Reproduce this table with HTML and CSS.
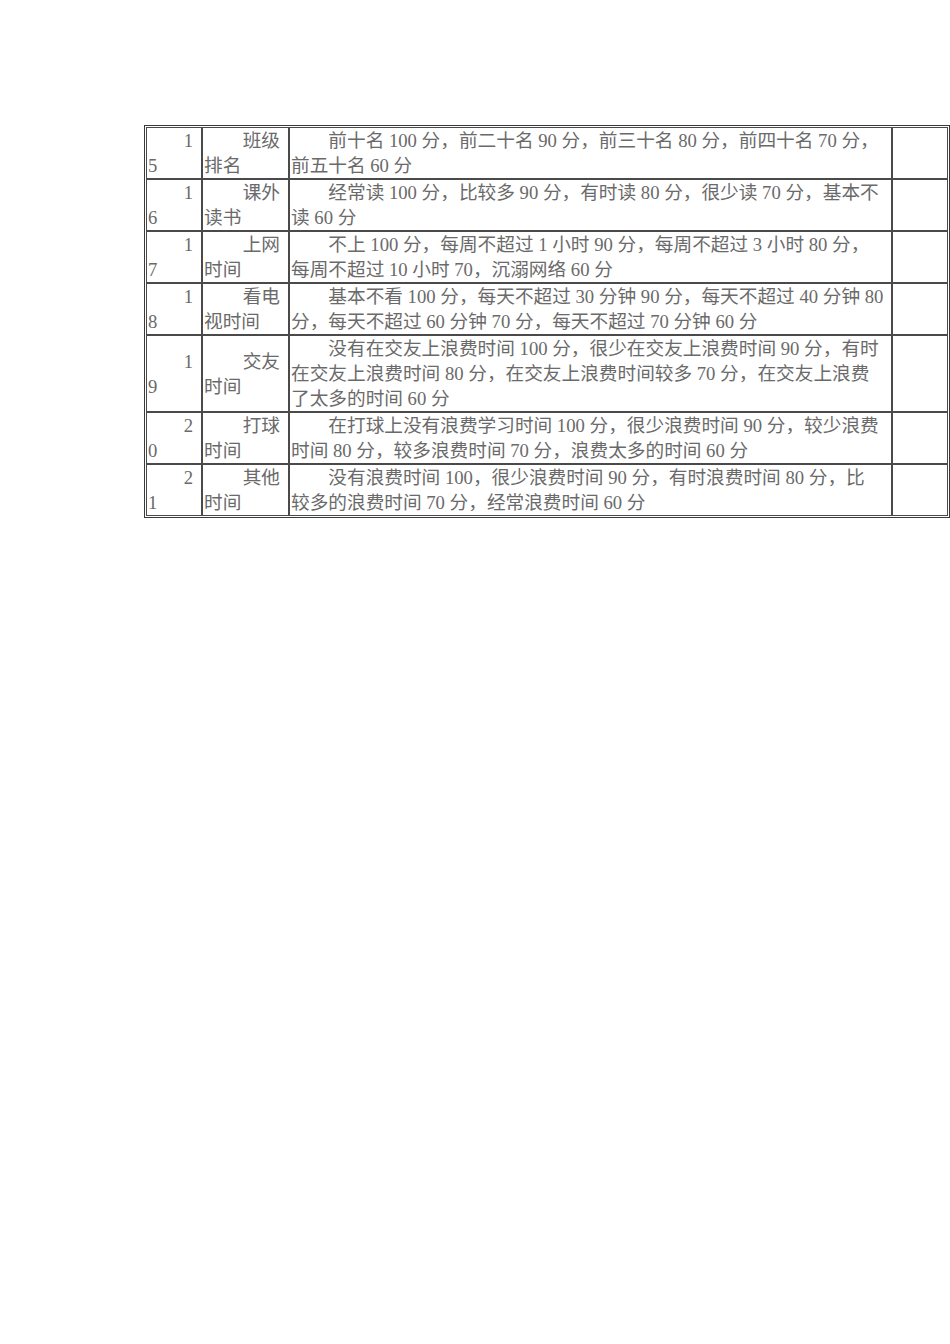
FILE: index.html
```html
<!DOCTYPE html>
<html lang="zh-CN">
<head>
<meta charset="utf-8">
<title>评分表</title>
<link rel="stylesheet" href="styles.css">
</head>
<body>
<div class="page">
<table class="grid">
<colgroup><col class="c1"><col class="c2"><col class="c3"><col class="c4"></colgroup>
<tbody>
<tr>
<td><div class="r">1</div><div>5</div></td>
<td><div class="r">班级</div><div>排名</div></td>
<td><div class="first">前十名 100 分，前二十名 90 分，前三十名 80 分，前四十名 70 分，</div><div>前五十名 60 分</div></td>
<td></td>
</tr>
<tr>
<td><div class="r">1</div><div>6</div></td>
<td><div class="r">课外</div><div>读书</div></td>
<td><div class="first">经常读 100 分，比较多 90 分，有时读 80 分，很少读 70 分，基本不</div><div>读 60 分</div></td>
<td></td>
</tr>
<tr>
<td><div class="r">1</div><div>7</div></td>
<td><div class="r">上网</div><div>时间</div></td>
<td><div class="first">不上 100 分，每周不超过 1 小时 90 分，每周不超过 3 小时 80 分，</div><div>每周不超过 10 小时 70，沉溺网络 60 分</div></td>
<td></td>
</tr>
<tr>
<td><div class="r">1</div><div>8</div></td>
<td><div class="r">看电</div><div>视时间</div></td>
<td><div class="first">基本不看 100 分，每天不超过 30 分钟 90 分，每天不超过 40 分钟 80</div><div>分，每天不超过 60 分钟 70 分，每天不超过 70 分钟 60 分</div></td>
<td></td>
</tr>
<tr>
<td><div class="r">1</div><div>9</div></td>
<td><div class="r">交友</div><div>时间</div></td>
<td><div class="first">没有在交友上浪费时间 100 分，很少在交友上浪费时间 90 分，有时</div><div>在交友上浪费时间 80 分，在交友上浪费时间较多 70 分，在交友上浪费</div><div>了太多的时间 60 分</div></td>
<td></td>
</tr>
<tr>
<td><div class="r">2</div><div>0</div></td>
<td><div class="r">打球</div><div>时间</div></td>
<td><div class="first">在打球上没有浪费学习时间 100 分，很少浪费时间 90 分，较少浪费</div><div>时间 80 分，较多浪费时间 70 分，浪费太多的时间 60 分</div></td>
<td></td>
</tr>
<tr>
<td><div class="r">2</div><div>1</div></td>
<td><div class="r">其他</div><div>时间</div></td>
<td><div class="first">没有浪费时间 100，很少浪费时间 90 分，有时浪费时间 80 分，比</div><div>较多的浪费时间 70 分，经常浪费时间 60 分</div></td>
<td></td>
</tr>
</tbody>
</table>
</div>
</body>
</html>
```
FILE: styles.css
```css
html, body {
  margin: 0;
  padding: 0;
  background: #ffffff;
}

.page {
  padding: 125px 0 0 144px;
}

.grid {
  width: 806px;
  table-layout: fixed;
  border-collapse: separate;
  border-spacing: 0;
  border: 1px solid #3a3a3a;
  padding: 1px;
  font-family: "Liberation Serif", "Noto Sans CJK SC", serif;
  font-size: 18.67px;
  line-height: 25px;
  color: #6a6a6a;
}

.c1 { width: 56px; }
.c2 { width: 87px; }
.c3 { width: 603px; }
.c4 { width: 56px; }

.grid td {
  border: 1px solid #4a4a4a;
  padding: 0 1px;
  vertical-align: middle;
  white-space: nowrap;
  overflow: hidden;
}

.r {
  text-align: right;
  padding-right: 7px;
}

.first {
  text-indent: 2em;
}
```
